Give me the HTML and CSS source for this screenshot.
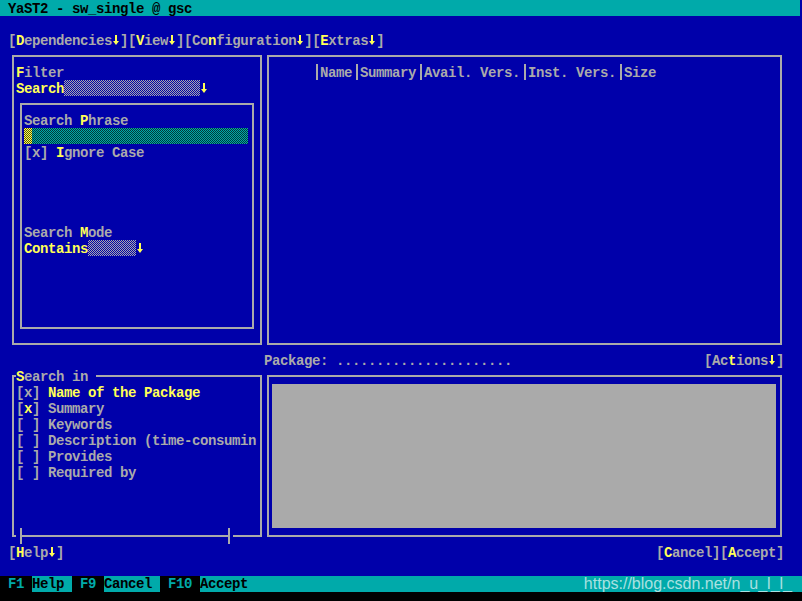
FILE: index.html
```html
<!DOCTYPE html>
<html>
<head>
<meta charset="utf-8">
<title>YaST2 - sw_single @ gsc</title>
<link rel="stylesheet" href="styles.css">
</head>
<body>
<div class="screen">
  <div class="row titlebar">YaST2 - sw_single @ gsc</div>
  <div class="row menu">[<span class="hk">D</span>ependencies<svg class="ar hk" viewBox="0 0 8 16"><path d="M3 3H5V9H7L4 13L1 9H3Z"/></svg>][<span class="hk">V</span>iew<svg class="ar hk" viewBox="0 0 8 16"><path d="M3 3H5V9H7L4 13L1 9H3Z"/></svg>][Co<span class="hk">n</span>figuration<svg class="ar hk" viewBox="0 0 8 16"><path d="M3 3H5V9H7L4 13L1 9H3Z"/></svg>][<span class="hk">E</span>xtras<svg class="ar hk" viewBox="0 0 8 16"><path d="M3 3H5V9H7L4 13L1 9H3Z"/></svg>]</div>

  <div class="upper">
    <div class="box filter">
      <div class="row"><span class="hk">F</span>ilter</div>
      <div class="row hl">Search<span class="combo combo-search"></span><svg class="ar" viewBox="0 0 8 16"><path d="M3 3H5V9H7L4 13L1 9H3Z"/></svg></div>
      <div class="box inner">
        <div class="row">Search <span class="hk">P</span>hrase</div>
        <div class="row"><span class="input"><span class="cursor"></span></span></div>
        <div class="row">[x] <span class="hk">I</span>gnore Case</div>
        <div class="blank4"></div>
        <div class="row">Search <span class="hk">M</span>ode</div>
        <div class="row hl">Contains<span class="combo combo-mode"></span><svg class="ar" viewBox="0 0 8 16"><path d="M3 3H5V9H7L4 13L1 9H3Z"/></svg></div>
      </div>
    </div>
    <div class="box list">
      <div class="row colhead"><span class="sep"></span>Name<span class="sep"></span>Summary<span class="sep"></span>Avail. Vers.<span class="sep"></span>Inst. Vers.<span class="sep"></span>Size</div>
    </div>
  </div>

  <div class="row pkgrow"><span>Package: ......................</span><span>[Ac<span class="hk">t</span>ions<svg class="ar hk" viewBox="0 0 8 16"><path d="M3 3H5V9H7L4 13L1 9H3Z"/></svg>]</span></div>

  <div class="lower">
    <div class="box searchin">
      <div class="row legend"><span class="hk">S</span>earch in</div>
      <div class="row">[x] <span class="hl">Name of the Package</span></div>
      <div class="row">[<span class="hk">x</span>] Summary</div>
      <div class="row">[ ] Keywords</div>
      <div class="row">[ ] Description (time-consumin</div>
      <div class="row">[ ] Provides</div>
      <div class="row">[ ] Required by</div>
      <div class="hscroll"><div class="track"></div></div>
    </div>
    <div class="box detail">
      <div class="detail-area"></div>
    </div>
  </div>

  <div class="row btnrow"><span>[<span class="hk">H</span>elp<svg class="ar hk" viewBox="0 0 8 16"><path d="M3 3H5V9H7L4 13L1 9H3Z"/></svg>]</span><span>[<span class="hk">C</span>ancel][<span class="hk">A</span>ccept]</span></div>
  <div class="row"></div>

  <div class="row fkeys">
    <span class="fk"> F1 </span><span class="fl">Help </span><span class="fk"> F9 </span><span class="fl">Cancel </span><span class="fk"> F10 </span><span class="fl fill">Accept</span>
    <span class="watermark">https://blog.csdn.net/n_u_l_l_</span>
  </div>
  <div class="footer"></div>
</div>
</body>
</html>
```

FILE: styles.css
```css
html, body {
  margin: 0;
  padding: 0;
  background: #0000aa;
}

.screen {
  width: 802px;
  height: 601px;
  overflow: hidden;
  background: #0000aa;
  color: #aaaaaa;
  font-family: "Liberation Mono", "DejaVu Sans Mono", monospace;
  font-weight: bold;
  font-size: 14px;
  letter-spacing: -0.4px;
  line-height: 16px;
}

.row {
  height: 16px;
  line-height: 18px;
  white-space: pre;
}

.hk, .hl {
  color: #ffff55;
}

.ar {
  display: inline-block;
  vertical-align: top;
  width: 8px;
  height: 16px;
  fill: currentColor;
}

.titlebar {
  background: #00aaaa;
  color: #000000;
  padding-left: 8px;
  width: 792px;
}

.menu {
  margin-top: 16px;
  padding-left: 8px;
}

.box {
  box-sizing: border-box;
  border: 2px solid #aaaaaa;
}

/* upper area: rows 3-21 */
.upper {
  display: flex;
  align-items: flex-start;
  height: 304px;
  padding-left: 12px;
}

.filter {
  margin-top: 7px;
  width: 250px;
  height: 290px;
  padding: 7px 0 0 2px;
}

.inner {
  margin: 7px 0 0 4px;
  width: 234px;
  height: 226px;
  padding: 7px 0 0 2px;
}

.blank4 {
  height: 64px;
}

.combo {
  display: inline-block;
  vertical-align: top;
  height: 16px;
  background: repeating-conic-gradient(#aaaaaa 0% 25%, #0000aa 0% 50%) 0 0 / 2px 2px;
}

.combo-search {
  width: 136px;
}

.combo-mode {
  width: 48px;
}

.input {
  display: inline-block;
  vertical-align: top;
  width: 224px;
  height: 16px;
  background: repeating-conic-gradient(#00aaaa 0% 25%, #003a3a 0% 50%) 0 0 / 2px 2px;
}

.cursor {
  display: inline-block;
  vertical-align: top;
  width: 8px;
  height: 16px;
  background: repeating-conic-gradient(#ffff55 0% 25%, #555500 0% 50%) 0 0 / 2px 2px;
}

.list {
  margin: 7px 0 0 5px;
  width: 515px;
  height: 290px;
  padding: 7px 0 0 43px;
}

.sep {
  display: inline-block;
  vertical-align: top;
  width: 8px;
  height: 16px;
  background: linear-gradient(#aaaaaa, #aaaaaa) 4px 0 / 2px 100% no-repeat;
}

.pkgrow {
  display: flex;
  justify-content: space-between;
  padding: 0 18px 0 264px;
}

/* lower area: rows 23-33 */
.lower {
  display: flex;
  align-items: flex-start;
  height: 176px;
  padding-left: 12px;
}

.searchin {
  position: relative;
  margin-top: 7px;
  width: 250px;
  height: 162px;
  padding-left: 2px;
}

.legend {
  width: 80px;
  margin-top: -9px;
  background: #0000aa;
}

.hscroll {
  position: absolute;
  left: 2px;
  top: 151px;
  width: 217px;
  height: 16px;
  background: #0000aa;
}

.track {
  box-sizing: border-box;
  margin-left: 4px;
  width: 210px;
  height: 16px;
  border-left: 2px solid #aaaaaa;
  border-right: 2px solid #aaaaaa;
  background: linear-gradient(#aaaaaa, #aaaaaa) 0 7px / 100% 2px no-repeat;
}

.detail {
  margin: 7px 0 0 5px;
  width: 515px;
  height: 162px;
  padding: 7px 0 0 3px;
}

.detail-area {
  width: 504px;
  height: 144px;
  background: #aaaaaa;
}

.btnrow {
  display: flex;
  justify-content: space-between;
  padding: 0 18px 0 8px;
}

.fkeys {
  position: relative;
  display: flex;
  line-height: 17px;
  overflow: hidden;
}

.fk {
  background: #000000;
  color: #00aaaa;
}

.fl {
  background: #00aaaa;
  color: #000000;
}

.fill {
  flex: 1;
}

.watermark {
  position: absolute;
  right: 10px;
  top: 0;
  font-family: "Liberation Sans", Arial, sans-serif;
  font-weight: normal;
  letter-spacing: 0;
  font-size: 16px;
  line-height: 16px;
  color: rgba(225, 245, 245, 0.75);
}

.footer {
  height: 9px;
  background: #000000;
}
```
